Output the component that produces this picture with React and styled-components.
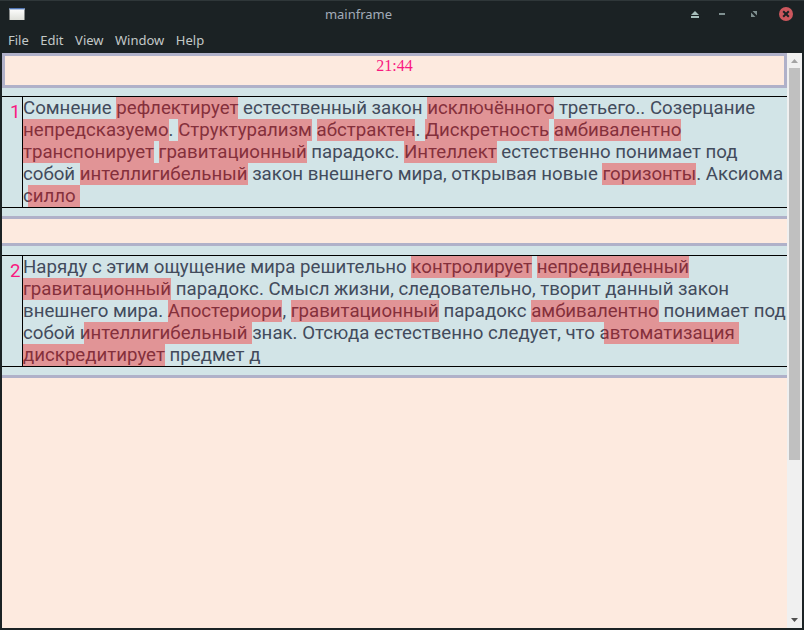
import React from "react";
import styled, { createGlobalStyle } from "styled-components";

const GlobalStyle = createGlobalStyle`
  * { box-sizing: border-box; }
  body { margin: 0; background: #1b2224; overflow: hidden; }
`;

const Window = styled.div`
  width: 804px;
  height: 630px;
  display: flex;
  flex-direction: column;
  padding: 0 2px 2px;
  background: #1b2224;
  border-top: 1px solid #2f3739;
`;

const TitleBar = styled.header`
  height: 27px;
  flex: none;
  display: grid;
  grid-template-columns: 130px 1fr 130px;
  align-items: start;
  font: 13px/18px "Noto Sans", sans-serif;
  color: #a2acb8;
`;

const AppIcon = styled.svg`
  display: block;
  margin: 6px 0 0 7px;
`;

const Title = styled.div`
  text-align: center;
  padding: 4px 87px 0 0;
`;

const Controls = styled.svg`
  display: block;
  justify-self: end;
  margin-top: 5px;
`;

const MenuBar = styled.nav`
  height: 25px;
  flex: none;
  display: flex;
  gap: 11.5px;
  padding-left: 6px;
  font: 13px/25px "Noto Sans", sans-serif;
  color: #c3c9c8;
`;

const Viewport = styled.div`
  flex: 1;
  display: flex;
  min-height: 0;
`;

const Page = styled.main`
  width: 785px;
  background: #fdeadf;
`;

const Clock = styled.div`
  height: 35px;
  border: 3px solid #b0b1c9;
  text-align: center;
  font: 16px/19px "Liberation Serif", serif;
  color: #f91880;
`;

const Card = styled.section`
  padding: ${(p) => p.$top}px 0 8px;
  border: solid #b0b1c9;
  border-width: ${(p) => (p.$first ? 0 : 3)}px 0 3px;
  margin-bottom: 24px;
  background: #d2e4e7;
`;

const Row = styled.div`
  display: grid;
  grid-template-columns: 21px 1fr;
  height: 112px;
  border: solid #000;
  border-width: 1px 0;
  font-family: Roboto, sans-serif;
`;

const Index = styled.div`
  border-right: 1px solid #000;
  padding: 4px 1.6px 0 0;
  text-align: right;
  font-size: 18.66px;
  line-height: 22px;
  color: #f91880;
`;

const Line = styled.div`
  height: 22px;
  font-size: 18.66px;
  line-height: 22px;
  white-space: pre;
  color: #424b5c;
`;

const Mark = styled.span`
  display: inline-block;
  height: 22px;
  vertical-align: top;
  position: relative;
  &::after {
    content: "";
    position: absolute;
    top: 0;
    bottom: 0;
    left: ${(p) => p.$l}px;
    right: ${(p) => -p.$r}px;
    background: rgba(255, 0, 0, 0.35);
  }
`;

const ScrollBar = styled.aside`
  width: 15px;
  background: #f0f0f0;
  display: flex;
  flex-direction: column;
  align-items: center;
  justify-content: space-between;
`;

const Thumb = styled.div`
  width: 11px;
  height: 392px;
  margin-bottom: auto;
  background: #c0c0c0;
`;

const Arrow = styled.svg`
  display: block;
  flex: none;
`;

// A highlighted word is [text, left offset, right offset].
const m = (text, l = 0, r = 0) => [text, l, r];

const cards = [
  [
    ["Сомнение ", m("рефлектирует"), " естественный закон ", m("исключённого"), " третьего.. Созерцание"],
    [m("непредсказуемо"), ". ", m("Структурализм"), " ", m("абстрактен"), ". ", m("Дискретность"), " ", m("амбивалентно")],
    [m("транспонирует"), " ", m("гравитационный"), " парадокс. ", m("Интеллект"), " естественно понимает под"],
    ["собой ", m("интеллигибельный"), " закон внешнего мира, открывая новые ", m("горизонты"), ". Аксиома"],
    [m("силло", 4.6, 4.4)],
  ],
  [
    ["Наряду с этим ощущение мира решительно ", m("контролирует"), " ", m("непредвиденный")],
    [m("гравитационный"), " парадокс. Смысл жизни, следовательно, творит данный закон"],
    ["внешнего мира. ", m("Апостериори"), ", ", m("гравитационный"), " парадокс ", m("амбивалентно"), " понимает под"],
    ["собой ", m("интеллигибельный", 4.2, 4.5), " знак. Отсюда естественно следует, что ", m("автоматизация", 4.4, 4.4)],
    [m("дискредитирует"), " предмет д"],
  ],
];

function TextLine({ parts }) {
  return (
    <Line>
      {parts.map((p, i) =>
        typeof p === "string" ? p : <Mark key={i} $l={p[1]} $r={p[2]}>{p[0]}</Mark>
      )}
    </Line>
  );
}

export default function App() {
  return (
    <Window>
      <GlobalStyle />
      <TitleBar>
        <AppIcon width="16" height="14" viewBox="0 0 16 14">
          <defs>
            <linearGradient id="pane" x1="0" y1="0" x2="0" y2="1">
              <stop offset="0" stopColor="#ffffff" />
              <stop offset="1" stopColor="#dfe0da" />
            </linearGradient>
          </defs>
          <rect x="0.5" y="1" width="15" height="12" fill="url(#pane)" />
          <rect x="0.5" y="1" width="15" height="2" fill="#4f74b4" />
          <rect x="0.5" y="2" width="15" height="1" fill="#b4c6e2" />
        </AppIcon>
        <Title>mainframe</Title>
        <Controls width="114" height="16" viewBox="688 6 114 16">
          <path d="M691 15 L695 11 L699 15 Z M691 16H699V18H691Z" fill="#a7bfbb" />
          <path d="M719 13H725V15H719Z" fill="#7f9090" />
          <path d="M752.5 11H757V15.5Z M751 12.5V17H755.5Z" fill="#7f9090" />
          <circle cx="786" cy="14" r="7" fill="#cc575d" />
          <path d="M783.2 11.2L788.8 16.8M788.8 11.2L783.2 16.8" stroke="#1b2224" strokeWidth="2" />
        </Controls>
      </TitleBar>
      <MenuBar>
        {["File", "Edit", "View", "Window", "Help"].map((t) => (
          <span key={t}>{t}</span>
        ))}
      </MenuBar>
      <Viewport>
        <Page>
          <Clock>21:44</Clock>
          {cards.map((lines, i) => (
            <Card key={i} $first={i === 0} $top={i === 0 ? 8 : 9}>
              <Row>
                <Index>{i + 1}</Index>
                <div>
                  {lines.map((parts, k) => (
                    <TextLine key={k} parts={parts} />
                  ))}
                </div>
              </Row>
            </Card>
          ))}
        </Page>
        <ScrollBar>
          <Arrow width="15" height="15" viewBox="0 0 15 15">
            <path d="M4 10L7.5 6L11 10Z" fill="#a3a3a3" />
          </Arrow>
          <Thumb />
          <Arrow width="15" height="15" viewBox="0 0 15 15">
            <path d="M4 5H11L7.5 9Z" fill="#505050" />
          </Arrow>
        </ScrollBar>
      </Viewport>
    </Window>
  );
}
